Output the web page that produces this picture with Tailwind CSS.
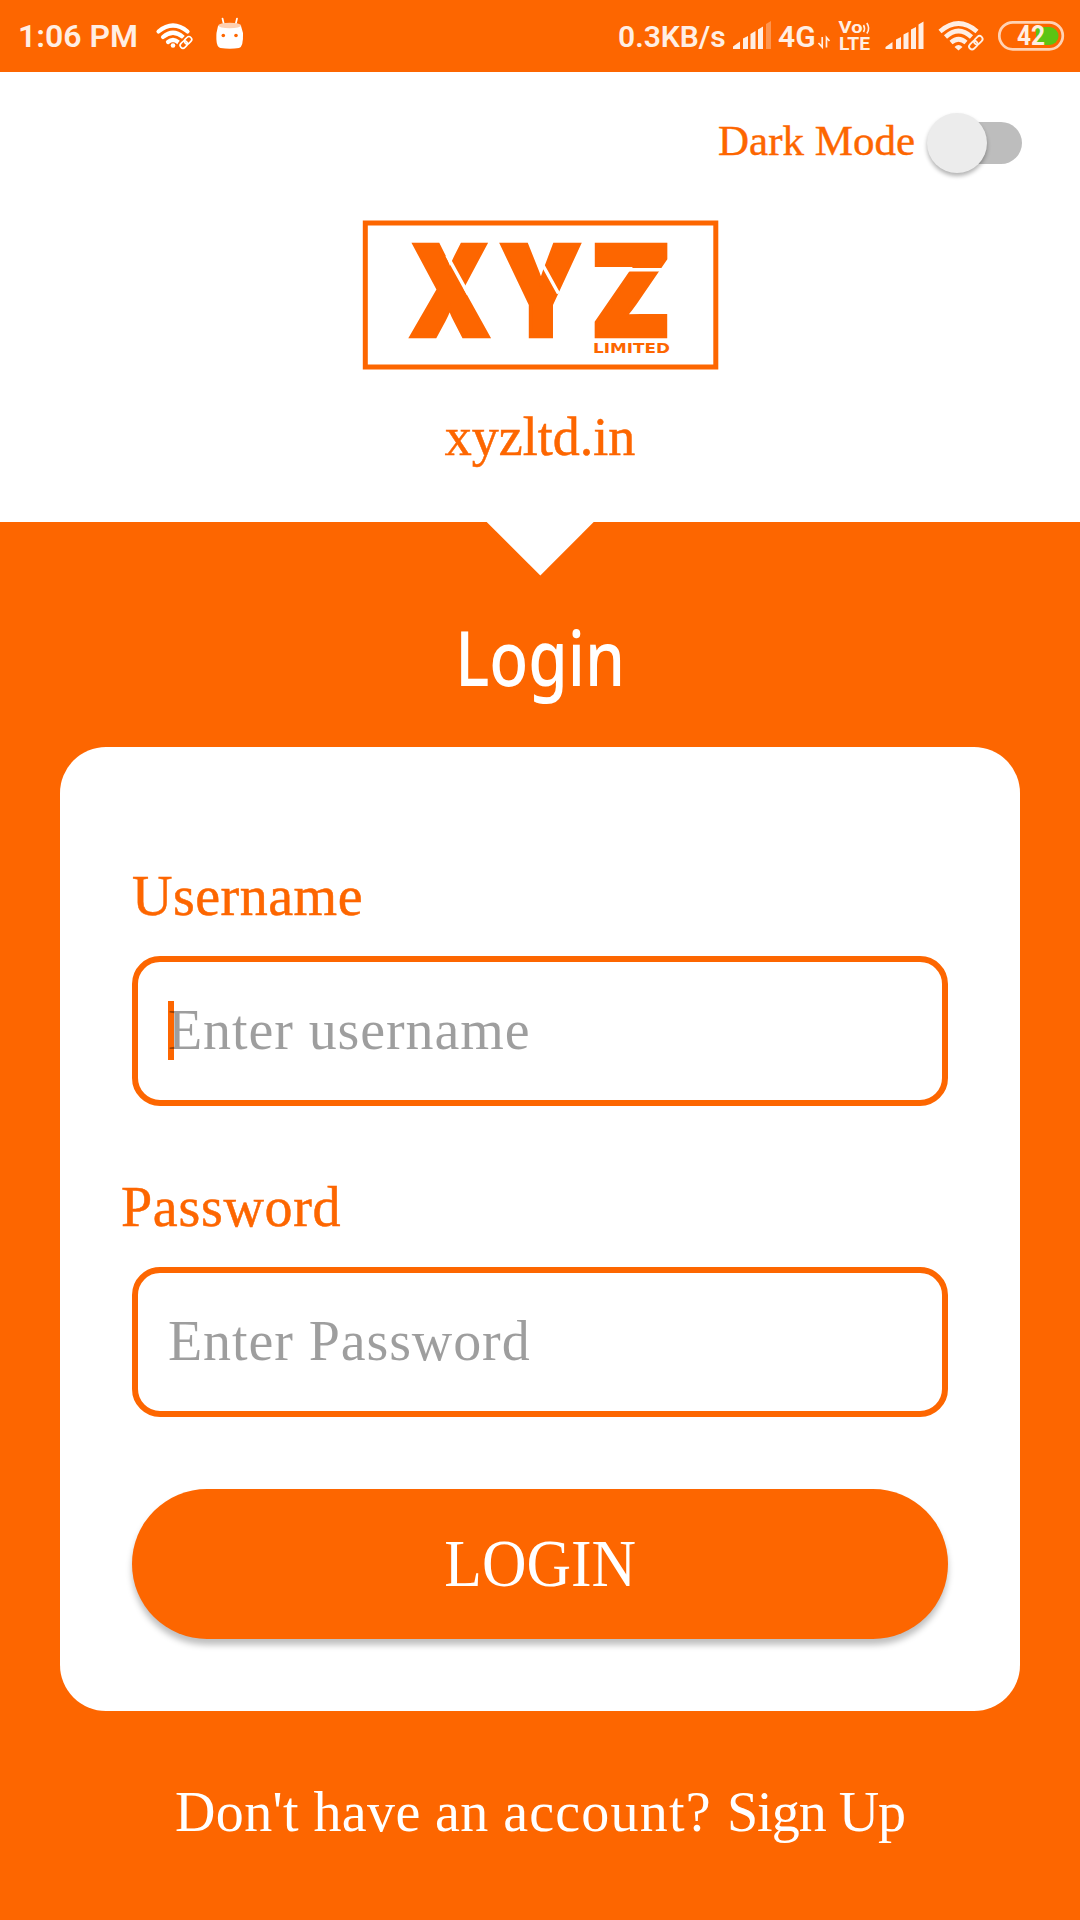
<!DOCTYPE html>
<html lang="en">
<head>
<meta charset="utf-8">
<title>Login</title>
<script src="https://cdn.jsdelivr.net/npm/@tailwindcss/browser@4"></script>
</head>
<body class="w-[1080px] h-[1920px] overflow-hidden bg-[#fd6600] font-['Liberation_Serif',serif] flex flex-col">

<!-- Status bar -->
<div class="h-[72px] flex items-center justify-between shrink-0 font-['Roboto',sans-serif] font-semibold text-[#ffeee3] whitespace-nowrap">
  <div class="flex items-center h-full pl-[18px]">
    <span class="w-[132px] text-[32px] leading-[74px]">1:06 PM</span>
    <svg class="w-[100px] h-[72px]" viewBox="150 0 100 72" fill="none" stroke="#fff">
      <g stroke-width="4.2" stroke-linecap="round">
        <path d="M158.500 31.500Q173 19.500 187.500 31.500"/>
        <path d="M163 37Q173 28.500 183 37"/>
        <path d="M168 42Q173 38 178 42" />
      </g>
      <circle cx="173" cy="45.500" r="2.300" fill="#fff" stroke="none"/>
      <g transform="rotate(-45 186 42.500)" stroke="#fd6600" stroke-width="5"><rect x="178.500" y="39.500" width="15" height="6" rx="3"/></g>
      <g transform="rotate(-45 186 42.500)" stroke-width="1.600"><rect x="179" y="39.600" width="8" height="5.600" rx="2.800"/><rect x="185" y="39.600" width="8" height="5.600" rx="2.800"/></g>
      <path d="M222.500 18.500L224 25M237 18.500L235.500 25" stroke-width="1.700" stroke-linecap="round"/>
      <path d="M218 26Q230 21 241 26L243 33Q243.500 47 239 48Q230 49.500 220.500 48Q215.500 47 216.500 33Z" fill="#fff" stroke="none"/>
      <ellipse cx="229.700" cy="25.500" rx="11.500" ry="2.800" fill="#ffd0b0" stroke="none"/>
      <circle cx="223.300" cy="35.500" r="1.800" fill="#fd6600" stroke="none"/><circle cx="236" cy="35.500" r="1.800" fill="#fd6600" stroke="none"/>
    </svg>
  </div>
  <div class="flex items-center h-full">
    <span class="w-[114px] text-[30px] leading-[73px]">0.3KB/s</span>
    <svg class="w-[46px] h-[72px]" viewBox="732 0 46 72" fill="#ffeee3">
      <path d="M733 49V46.500L740 41.500V49ZM743 49V38.500L748 36V49ZM750.500 49V34L755.500 31V49ZM758 49V29.500L763 26.500V49Z"/>
      <path d="M766 49V24L771 21V49Z" opacity=".35"/>
    </svg>
    <span class="w-[39px] text-[30px] leading-[73px]">4G</span>
    <svg class="w-[263px] h-[72px]" viewBox="817 0 263 72" fill="none" stroke="#ffeee3">
      <path d="M822.200 37V47L818.500 43M826.500 47.500V37.500L829.500 41" stroke-width="1.700"/>
      <g fill="#ffeee3" stroke="none" font-family="Roboto" font-weight="700">
        <text x="838.500" y="33.300" font-size="17" textLength="24" lengthAdjust="spacingAndGlyphs">Vo</text>
        <text x="839" y="49.500" font-size="18" textLength="31" lengthAdjust="spacingAndGlyphs">LTE</text>
      </g>
      <path d="M863.500 25Q865.500 28.500 863.500 32M866.800 23Q870.500 28.500 866.800 33.500" stroke-width="1.600"/>
      <path fill="#ffeee3" stroke="none" d="M885.500 49V47L892.500 42V49ZM896 49V39.500L901 37V49ZM903.500 49V34.500L908.500 32V49ZM911 49V29.500L916 27V49ZM918.500 49V24.500L923.500 21.500V49Z"/>
      <g stroke-width="4.600">
        <path d="M940 31.500Q958.500 15.500 977 31.500"/>
        <path d="M945.500 37Q958.500 25 971.500 37"/>
        <path d="M951 42.500Q958.500 36 966 42.500"/>
      </g>
      <path d="M954.500 47Q958.500 43 962.500 47L958.500 50.500Z" fill="#ffeee3" stroke="none"/>
      <g transform="rotate(-45 976 42.500)" stroke="#fd6600" stroke-width="5"><rect x="967" y="39.500" width="18" height="6.500" rx="3"/></g>
      <g transform="rotate(-45 976 42.500)" stroke-width="1.800"><rect x="967.500" y="39.500" width="9.500" height="6" rx="3"/><rect x="974.500" y="39.500" width="9.500" height="6" rx="3"/></g>
      <rect x="999.300" y="22.300" width="63.500" height="27" rx="13.500" stroke="#ffd2b3" stroke-width="2.700"/>
      <path d="M1036 27H1049.500A9 9 0 0 1 1049.500 45H1036Z" fill="#5dc413" stroke="none"/>
      <text x="1017" y="45" font-family="Roboto" font-weight="700" font-size="27" fill="#ffeee3" stroke="none" textLength="28" lengthAdjust="spacingAndGlyphs">42</text>
    </svg>
  </div>
</div>

<!-- Brand header -->
<header class="h-[450px] shrink-0 bg-white text-[#fd6600] flex flex-col items-center">
  <div class="w-full h-[148px] pt-[40px] pl-[718px] flex items-start">
    <span class="w-[208px] text-[43px] leading-[58px] whitespace-nowrap [-webkit-text-stroke:0.4px]">Dark Mode</span>
    <button class="w-[96px] h-[60px] mt-[0.5px] flex items-center relative" aria-label="Dark mode">
      <span class="ml-[11px] mt-[1px] w-[85px] h-[42px] rounded-full bg-[#bdbdbd]"></span>
      <span class="absolute left-[0.5px] top-0 size-[60px] rounded-full bg-[#ececec] shadow-[0_3px_4px_rgba(0,0,0,0.3)]"></span>
    </button>
  </div>
  <svg class="w-[356px] h-[150px] overflow-visible" viewBox="362 219.500 356 150" fill="#fd6600">
    <rect x="365.300" y="222.500" width="350.500" height="144" fill="none" stroke="#fd6600" stroke-width="5"/>
    <g font-family="Inter" font-weight="900" font-size="124.500" stroke="#fd6600" stroke-width="4.400">
      <text x="409.500" y="335.300" textLength="80.500" lengthAdjust="spacingAndGlyphs">X</text>
      <text x="500" y="335.300" textLength="81" lengthAdjust="spacingAndGlyphs">Y</text>
      <text x="591" y="335.300" textLength="80" lengthAdjust="spacingAndGlyphs">Z</text>
    </g>
    <path d="M447 255L468.500 294M537.500 255L558.500 293M592 269.200H672" stroke="#fff" stroke-width="3.500"/>
    <text x="593" y="352.500" font-family="DejaVu Sans" font-weight="700" font-size="14" textLength="77" lengthAdjust="spacingAndGlyphs">LIMITED</text>
  </svg>
  <p class="mt-[30px] text-[54px] leading-[74px] [-webkit-text-stroke:0.5px]">xyzltd.in</p>
</header>

<main class="flex flex-col items-center text-white">
  <svg class="w-[108px] h-[54px]" viewBox="0 0 108 54"><path d="M0.700 0H107.700L54.300 53.500Z" fill="#fff"/></svg>
  <h1 class="mt-[29px] h-[142px] text-[76px] leading-[104px] font-medium font-['Noto_Sans',sans-serif] scale-x-[0.84]">Login</h1>

  <form class="w-[960px] h-[964px] rounded-[46px] bg-white text-[#fd6600] px-[72px] pt-[109px] flex flex-col">
    <label class="h-[100px] text-[56px] leading-[80px] tracking-[0.5px] [-webkit-text-stroke:0.5px]">Username</label>
    <div class="h-[150px] shrink-0 rounded-[28px] border-[6px] border-[#fd6600] flex items-center pl-[30px] relative">
      <span class="absolute left-[30px] top-[39px] w-[6px] h-[59px] bg-[#fd6600]"></span>
      <span class="relative text-black/38 text-[56px] leading-[60px] tracking-[0.9px] -mt-[2px]">Enter username</span>
    </div>
    <label class="mt-[61px] -ml-[11px] h-[100px] text-[56px] leading-[80px] tracking-[0.7px] [-webkit-text-stroke:0.5px]">Password</label>
    <div class="h-[150px] shrink-0 rounded-[28px] border-[6px] border-[#fd6600] flex items-center pl-[30px]">
      <span class="text-black/38 text-[56px] leading-[60px] tracking-[0.9px] -mt-[2px]">Enter Password</span>
    </div>
    <button class="mt-[72px] h-[150px] shrink-0 rounded-full bg-[#fd6600] text-white text-[67px] flex items-center justify-center shadow-[0_6px_6px_rgba(0,0,0,0.25)]">
      <span class="scale-x-[0.92] leading-[80px] -mt-[3px]">LOGIN</span>
    </button>
  </form>

  <p class="mt-[61px] text-[56px] leading-[80px] whitespace-nowrap"><span class="tracking-[0.4px]">Don't have an </span><span class="tracking-[1.2px]">account? </span><span class="tracking-[-1px]">Sign Up</span></p>
</main>
</body>
</html>
